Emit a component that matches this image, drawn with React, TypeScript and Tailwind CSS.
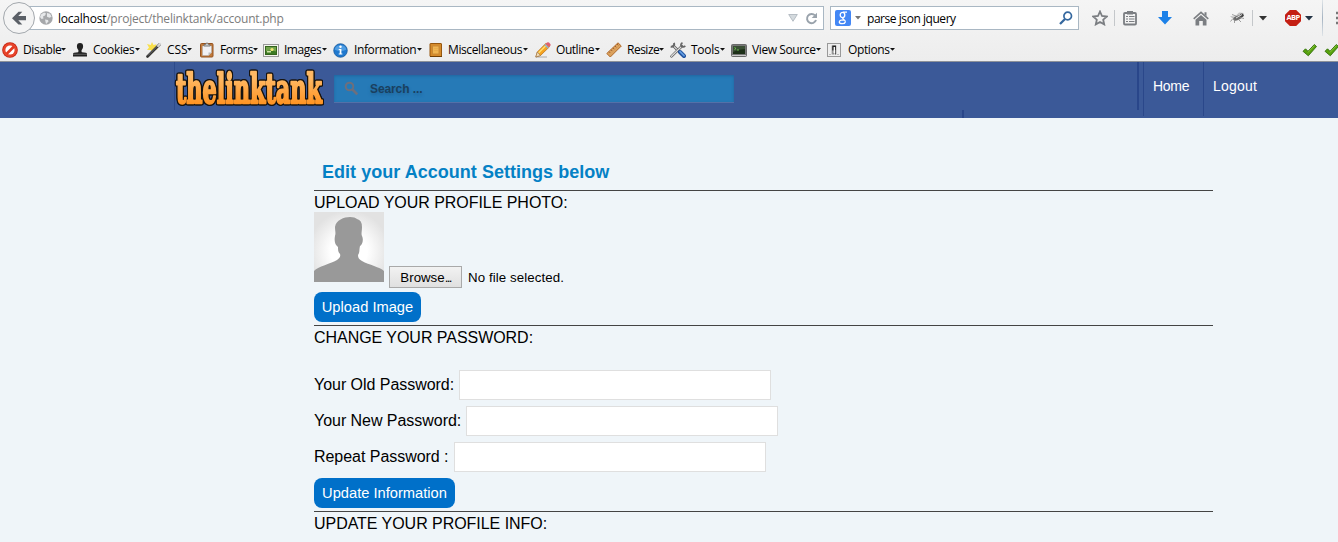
import React from "react";

const ui = "font-['Open_Sans','Noto_Sans',sans-serif]";

const DisableIcon = () => (
  <svg width="16" height="16" viewBox="0 0 16 16">
    <circle cx="8" cy="8" r="7.8" fill="#c5230f" />
    <circle cx="8" cy="8" r="7" fill="#e8452c" />
    <circle cx="8" cy="8" r="4.6" fill="#fff" />
    <path d="M3.6 11 11 3.6 13 5.4 5.4 13z" fill="#e2391f" />
  </svg>
);
const CookiesIcon = () => (
  <svg width="16" height="16" viewBox="0 0 16 16">
    <path d="M8 1a3.2 3.2 0 0 1 3.1 3.3c0 1.8-.8 2.8-1.4 3.8-.3.7-.2 1.7.2 2.2l4.1.5q1 .2 1 1.2v2.5H1V12q0-1 1-1.2l4.1-.5c.4-.5.5-1.5.2-2.2C5.7 7.1 4.9 6.1 4.9 4.3A3.2 3.2 0 0 1 8 1z" fill="#222" />
    <path d="M1 12.3h14" stroke="#777" strokeWidth=".7" />
  </svg>
);
const CssIcon = () => (
  <svg width="16" height="16" viewBox="0 0 16 16">
    <path d="m6 0 1.5 3 3-.8-.8 3 2 2-3 .5L7 11 5 8 1 8l2-2.5L1 2l3.7 1z" fill="#f9e04c" />
    <path d="M1.5 14.5 13.5 2.5" stroke="#333" strokeWidth="2.6" strokeLinecap="round" />
    <path d="M12 4 14.2 1.8" stroke="#ddd" strokeWidth="2" strokeLinecap="round" />
    <path d="M2 13.5 12 3.5" stroke="#999" strokeWidth=".6" />
  </svg>
);
const FormsIcon = () => (
  <svg width="16" height="16" viewBox="0 0 16 16">
    <rect x="1.5" y="1.5" width="12.5" height="13.5" rx="1" fill="#c07a3c" stroke="#96531f" />
    <path d="M3.5 4h9v6.500l-3 3h-6z" fill="#f1f1f4" stroke="#aaa" strokeWidth=".5" />
    <path d="M9.500 13.500v-3h3z" fill="#bbb" />
    <path d="M5 4V2.500h1.500a1.500 1.500 0 0 1 3 0H11V4z" fill="#ccc" stroke="#666" strokeWidth=".7" />
  </svg>
);
const ImagesIcon = () => (
  <svg width="16" height="16" viewBox="0 0 16 16">
    <rect x=".5" y="2.500" width="15" height="12" fill="#f5f5ee" stroke="#999" />
    <rect x="2.500" y="4.500" width="11" height="8" fill="#71a34a" stroke="#34641d" />
    <path d="M3 12V9.500q4-2 10 0V12z" fill="#3c7a22" />
    <circle cx="9" cy="7.500" r="1.600" fill="#f4e878" />
    <path d="M4 9h4v1.500H4z" fill="#cfe3a8" />
  </svg>
);
const InfoIcon = () => (
  <svg width="16" height="16" viewBox="0 0 16 16">
    <circle cx="7.500" cy="8.500" r="6.800" fill="#2079cf" stroke="#115497" strokeWidth=".7" />
    <path d="M1.500 7.500a6.200 5.800 0 0 1 12 0q-6 3-12 0z" fill="#64aceb" opacity=".7" />
    <circle cx="7.500" cy="4.800" r="1.200" fill="#fff" />
    <path d="M5.700 7h2.700v4.500h1v1H5.700v-1h1V8h-1z" fill="#fff" />
  </svg>
);
const MiscIcon = () => (
  <svg width="14" height="16" viewBox="0 0 14 16">
    <rect x="1" y="1.500" width="11.500" height="13" rx=".5" fill="#d68b2b" stroke="#96570f" />
    <rect x="3.500" y="4" width="6.500" height="8" fill="#f0b552" stroke="#c98a36" />
    <path d="M5 6.500h4M5 8.500h4" stroke="#e8ac4c" />
    <path d="M1 14.500h12" stroke="#704007" />
  </svg>
);
const OutlineIcon = () => (
  <svg width="16" height="16" viewBox="0 0 16 16">
    <path d="M1 15h11" stroke="#aaa" strokeWidth="1" />
    <path d="m.8 15 1.500-5L11 1.300l3.500 3.500L5.500 13.500z" fill="#f5a321" stroke="#b36a0e" strokeWidth=".7" />
    <path d="m3.500 11 8-8" stroke="#ffdf71" strokeWidth="1.500" />
    <path d="m.8 15 1.500-5 3.200 3.500z" fill="#f2ddba" stroke="#846340" strokeWidth=".5" />
    <path d="m10.500 2 1.500-1.500q1-.7 2 0l1.300 1.400q.7 1 0 1.800L14 5z" fill="#df6070" />
    <path d="m9.800 2.500 3.500 3.500" stroke="#8eaed0" strokeWidth="1.500" />
  </svg>
);
const ResizeIcon = () => (
  <svg width="16" height="16" viewBox="0 0 16 16">
    <path d="M.8 11.500 12 .8 15.300 4 4.300 15z" fill="#dba15c" stroke="#b06a2c" />
    <path d="m3 9.700 1.300 1.300m.7-3.200 1.300 1.300m.7-3.200 1.300 1.300M9 4l1.300 1.300M11 2l1.300 1.300" stroke="#925224" strokeWidth=".8" />
  </svg>
);
const ToolsIcon = () => (
  <svg width="16" height="16" viewBox="0 0 16 16">
    <path d="m3.500 4 9 9" stroke="#555" strokeWidth="2.600" />
    <path d="m3.500 4 5 5" stroke="#d4d4d4" strokeWidth="1.300" />
    <path d="M4 .8a3 3 0 0 1-3.300 4" fill="none" stroke="#666" strokeWidth="2" />
    <path d="M1.500 14.300 12 4" stroke="#555" strokeWidth="2.500" strokeLinecap="round" />
    <path d="M1.500 14.300 12 4" stroke="#ddd" strokeWidth="1.200" strokeLinecap="round" />
    <path d="M12.500.8q-2.500 1.500-1 3.300t3.800-.3" fill="none" stroke="#666" strokeWidth="1.700" />
    <path d="m10 10 4 4" stroke="#1c4e9c" strokeWidth="4" strokeLinecap="round" />
    <path d="m10 9.700 4 4" stroke="#629ce0" strokeWidth="1.800" strokeLinecap="round" />
  </svg>
);
const SourceIcon = () => (
  <svg width="16" height="16" viewBox="0 0 16 16">
    <rect x=".5" y="2.500" width="15" height="12" rx="1" fill="#777" stroke="#6a6a6a" />
    <rect x="2" y="4" width="12" height="8" fill="#1d3018" />
    <path d="M2 4h12v3Q8 7 2 10z" fill="#3a4f35" />
    <path d="m3.500 5.500 1.500 1-1.500 1M6 8h2" fill="none" stroke="#77da54" strokeWidth=".8" />
    <path d="M1 13.500h14" stroke="#ccc" />
  </svg>
);
const OptionsIcon = () => (
  <svg width="14" height="16" viewBox="0 0 14 16">
    <rect x=".5" y="1.500" width="13" height="13" fill="#eee" stroke="#999" />
    <path d="M4 3.500h6v9H4z" fill="#d0d0d0" />
    <rect x="5.200" y="3.500" width="3.800" height="5" fill="#222" />
    <path d="M5.500 8h1v4.500h-1zM8 8h1v4.500H8z" fill="#555" />
    <path d="M6.600 5h1.500v6H6.600z" fill="#fff" />
    <path d="M2.500 12.500h1m7 0h1" stroke="#888" />
  </svg>
);
const Check = () => (
  <svg className="shrink-0" width="16" height="16" viewBox="0 0 16 16">
    <path d="M1 9.300 3.500 6.800 6 9.300 12.300 2.500 14.500 4.500 6.300 13.800z" fill="#57a10d" stroke="#32700a" strokeWidth=".9" strokeLinejoin="round" />
    <path d="m6 10.400 6.500-6.900" stroke="#96d347" strokeWidth=".8" />
  </svg>
);

type Tool = { label: string; icon: React.ReactNode; box: string; text: string };
const tools: Tool[] = [
  { label: "Disable", icon: <DisableIcon />, box: "w-[70px]", text: "w-[38px] tracking-[-0.4px]" },
  { label: "Cookies", icon: <CookiesIcon />, box: "w-[74px]", text: "w-[42px] tracking-[-0.35px]" },
  { label: "CSS", icon: <CssIcon />, box: "w-[53px]", text: "w-[20px] tracking-[-0.1px]" },
  { label: "Forms", icon: <FormsIcon />, box: "w-[64px]", text: "w-[33px] tracking-[-0.4px]" },
  { label: "Images", icon: <ImagesIcon />, box: "w-[70px]", text: "w-[38px] tracking-[-0.5px]" },
  { label: "Information", icon: <InfoIcon />, box: "w-[96px]", text: "w-[63px] tracking-[-0.38px]" },
  { label: "Miscellaneous", icon: <MiscIcon />, box: "w-[106px]", text: "w-[75px] tracking-[-0.4px]" },
  { label: "Outline", icon: <OutlineIcon />, box: "w-[71px]", text: "w-[39px] tracking-[-0.45px]" },
  { label: "Resize", icon: <ResizeIcon />, box: "w-[64px]", text: "w-[32px] tracking-[-0.5px]" },
  { label: "Tools", icon: <ToolsIcon />, box: "w-[61px]", text: "w-[29px] tracking-[-0.25px]" },
  { label: "View Source", icon: <SourceIcon />, box: "w-[96px]", text: "w-[64px] tracking-[-0.4px]" },
  { label: "Options", icon: <OptionsIcon />, box: "w-[70px]", text: "ml-[7px] w-[42px] tracking-[-0.4px]" },
];

const Caret = ({ className = "" }: { className?: string }) => (
  <svg className={"shrink-0 " + className} width="8" height="5" viewBox="0 0 8 5">
    <path d="M0 0h8L4 4.600z" fill="currentColor" />
  </svg>
);

function Browser() {
  return (
    <div className={"h-[62px] border-b border-[#8e9299] bg-gradient-to-b from-[#f5f5f5] to-[#ededed] text-[12px] text-black " + ui}>
      <div className="flex h-[38px] items-start">
        <svg className="z-10 shrink-0" width="36" height="36" viewBox="0 0 36 36">
          <circle cx="19" cy="18" r="15.500" fill="#f4f4f4" stroke="#a3a8ad" />
          <path d="M12 18.200 18.500 11.700h3.800L18.300 16h7.700v4.200h-7.700l4 4.300h-3.800z" fill="#5b6067" />
        </svg>
        <div className="mt-[6px] -ml-[16px] flex h-6 w-[804px] shrink-0 items-center border border-[#a9b7c3] bg-white pr-[5px] pl-[18px]">
          <svg width="14" height="14" viewBox="0 0 14 14">
            <circle cx="7" cy="7" r="6.700" fill="#a6a8ab" />
            <path d="M2 3.500 5 1.500l2 1-1 2-2 1 .5 2-2 .5L1 6zM8 2l3 .7 1.500 3-2 1-2.500-1zM6 8.500l3 .5.5 1.500L7 13z" fill="#e6e8ea" />
          </svg>
          <span className="ml-[5px] grow whitespace-nowrap text-[12px] tracking-[-0.23px] text-[#7c7c7c]"><span className="text-black">localhost</span>/project/thelinktank/account.php</span>
          <svg width="10" height="8" viewBox="0 0 10 8"><path d="M.7.5h8.600L5 7.300z" fill="#d4dade" stroke="#a9b2ba" strokeWidth=".8" /></svg>
          <svg className="ml-[7px]" width="13" height="13" viewBox="0 0 13 13">
            <path d="M10 3.400A4.600 4.600 0 1 0 11 8" fill="none" stroke="#9aa3ac" strokeWidth="2" />
            <path d="M12 .7v5.200H6.700z" fill="#9aa3ac" />
          </svg>
        </div>
        <div className="mt-[6px] ml-[6px] flex h-6 w-[249px] shrink-0 items-center border border-[#a9b7c3] bg-white pr-[5px] pl-1">
          <span className="flex h-4 w-4 shrink-0 items-center justify-center rounded-[2px] bg-[#4387f5]">
            <svg width="12" height="14" viewBox="0 0 12 14" fill="none" stroke="#fff">
              <ellipse cx="5.500" cy="4" rx="2.300" ry="2.600" strokeWidth="1.300" />
              <path d="M6 1.200h4M6.500 6.500C4 8 8.800 8.500 8.300 11c-.6 2.300-6 2.200-6 0 0-1.800 3-2.300 5-1.800" strokeWidth="1.300" />
            </svg>
          </span>
          <svg className="ml-1" width="6" height="4" viewBox="0 0 6 4"><path d="M0 0h6L3 3.500z" fill="#777" /></svg>
          <span className="ml-[6px] grow whitespace-nowrap tracking-[-0.45px]">parse json jquery</span>
          <svg width="14" height="14" viewBox="0 0 14 14" fill="none" stroke="#35689f">
            <circle cx="8.700" cy="5" r="3.800" strokeWidth="1.700" />
            <path d="m6 8-5 5" strokeWidth="2.300" />
          </svg>
        </div>
        <div className="flex h-9 grow items-center overflow-hidden text-[#7b7e82]">
          <svg className="ml-[13px] shrink-0" width="16" height="16" viewBox="0 0 16 16">
            <path d="m8 1.500 2 4.500 4.800.5-3.600 3.200 1 4.700L8 12l-4.200 2.400 1-4.700-3.600-3.200L6 6z" fill="none" stroke="currentColor" strokeWidth="1.800" />
          </svg>
          <span className="ml-[6px] h-4 w-px shrink-0 bg-[#c4c7ca]" />
          <svg className="ml-[8px] shrink-0" width="14" height="16" viewBox="0 0 14 16">
            <rect x="1" y="3" width="12" height="11.500" rx="1" fill="none" stroke="currentColor" strokeWidth="1.800" />
            <path d="M4 1h6v3.500H4z" fill="currentColor" />
            <path d="M3 6.500h2m1 0h5.500M3 9h2m1 0h5.500M3 11.500h2m1 0h5.500" stroke="currentColor" strokeWidth="1.200" />
          </svg>
          <svg className="ml-[21px] shrink-0" width="14" height="14" viewBox="0 0 14 14"><path d="M4 0h6v6h4l-7 7.500L0 6h4z" fill="#1c81e8" /></svg>
          <svg className="ml-[21px] shrink-0" width="16" height="15" viewBox="0 0 16 15">
            <path d="M8 .3 15.800 7.300l-1 1.200L8 2.600 1.200 8.500l-1-1.200z" fill="currentColor" />
            <path d="m8 4 5.500 4.800v5.700H9.800v-4.500H6.200v4.500H2.500V8.800zM11.500 1.200h2v4l-2-1.800z" fill="currentColor" />
          </svg>
          <svg className="ml-[20px] shrink-0" width="17" height="14" viewBox="0 0 17 14">
            <path d="m1 5 5 .5 4-4 5 .5-5 5-5 2z" fill="#c2c2c2" />
            <ellipse cx="8.500" cy="7" rx="4.500" ry="2.200" transform="rotate(-22 8.500 7)" fill="#6a6a6a" />
            <path d="m3.500 8-2 2.500m4-2v3.500m3.500-4 3 3m-1-4.500 4 1m-8-2.500-4-1.500" stroke="#888" strokeWidth=".8" />
            <circle cx="12.800" cy="4.300" r="1.900" fill="#444" />
            <path d="m7 7 6-3.500" stroke="#ddd" />
          </svg>
          <span className="ml-[6px] h-4 w-px shrink-0 bg-[#c4c7ca]" />
          <Caret className="ml-[6px] text-[#333]" />
          <div className="ml-[18px] flex h-4 w-4 shrink-0 items-center justify-center bg-[#c41f13] [clip-path:polygon(30%_0,70%_0,100%_30%,100%_70%,70%_100%,30%_100%,0_70%,0_30%)]">
            <span className="font-['Open_Sans',sans-serif] text-[7.500px] leading-none font-bold tracking-[-0.6px] text-white">ABP</span>
          </div>
          <Caret className="ml-1 text-[#223244]" />
          <span className="ml-[9px] h-9 w-px shrink-0 bg-gradient-to-b from-[#dfe4e8] via-[#a6b4c2] to-[#dfe4e8]" />
          <svg className="ml-[13px] shrink-0" width="10" height="14" viewBox="0 0 10 14"><path d="M0 2h10M0 7h10M0 12h10" stroke="#777" strokeWidth="2.500" /></svg>
        </div>
      </div>
      <div className="flex h-[23px] items-center overflow-hidden pl-[2px]">
        {tools.map((t) => (
          <div key={t.label} className={"flex shrink-0 items-center " + t.box}>
            <span className="shrink-0">{t.icon}</span>
            <span className={"ml-[5px] shrink-0 whitespace-nowrap " + t.text}>{t.label}</span>
            <svg className="shrink-0" width="5" height="3" viewBox="0 0 5 3"><path d="M0 0h5L2.500 2.800z" fill="#111" /></svg>
          </div>
        ))}
        <div className="ml-auto flex w-[36px] shrink-0 gap-[6px]"><Check /><Check /></div>
      </div>
    </div>
  );
}

function Header() {
  return (
    <header className="flex h-14 bg-[#3b5998]">
      <div className="w-[1143px] shrink-0">
        <div className="flex h-12">
          <div className="ml-[174px] flex w-[963px] border-l border-[#2c4a8b]">
            <svg className="mt-[3px] -ml-px overflow-visible [filter:drop-shadow(1px_0_0_#17130f)_drop-shadow(-1px_0_0_#17130f)_drop-shadow(0_1px_0_#17130f)_drop-shadow(0_-1px_0_#17130f)]" width="152" height="44" viewBox="0 0 152 44">
              <defs>
                <linearGradient id="brand" x1="0" y1="0" x2="0" y2="1">
                  <stop offset="0.300" stopColor="#ffb964" />
                  <stop offset="0.850" stopColor="#ff9220" />
                </linearGradient>
              </defs>
              <text x="2" y="18.300" transform="scale(1 2.050)" textLength="146" lengthAdjust="spacingAndGlyphs" fontFamily="DejaVu Serif, serif" fontWeight="700" fontSize="20.200" fill="url(#brand)" stroke="url(#brand)" strokeWidth="1.100" strokeLinejoin="round">thelinktank</text>
            </svg>
            <div className="mt-[13px] ml-[8px] flex h-[28px] w-[400px] items-center border-b border-[#5470a8] bg-[#267ab7] pl-[10px] shadow-[inset_0_1px_3px_#1f659f]">
              <svg width="15" height="15" viewBox="0 0 15 15" fill="none" stroke="#6e6f7c">
                <circle cx="5.500" cy="5.500" r="3.800" strokeWidth="2" />
                <path d="m8.500 8.500 4.800 4.800" strokeWidth="2.500" />
              </svg>
              <span className="ml-[11px] pt-px text-[12px] font-bold tracking-[-0.1px] text-[#1a405f] [text-shadow:0_2px_3px_#1f659a]">Search ...</span>
            </div>
          </div>
          <span className="w-[2px] bg-[#29468a]" />
        </div>
        <div className="ml-[962px] h-2 w-[2px] bg-[#29468a]" />
      </div>
      <nav className="flex h-[54px] items-start text-[14px] text-white">
        <a className="flex h-full w-[60px] border-l border-[#2a478a] pt-[15px] pl-[9px] tracking-[-0.3px]">Home</a>
        <a className="flex h-full border-l border-[#2a478a] pt-[15px] pl-[9px] tracking-[0.2px]">Logout</a>
      </nav>
    </header>
  );
}

const Avatar = () => (
  <svg className="shrink-0" width="70" height="70" viewBox="0 0 70 70">
    <defs>
      <radialGradient id="glow" cx=".5" cy=".56" r=".58">
        <stop offset="0.450" stopColor="#fff" />
        <stop offset="1" stopColor="#e2e2e2" />
      </radialGradient>
    </defs>
    <path d="M0 0h70v70H0z" fill="url(#glow)" />
    <path d="M0 70V59c3-4 18-8 23-11 2-2 4-3 3-6-2-2-2-4-2-7-3-2-4-6-3-11 1-3 0-5 0-9C22 8 30 5 36 5q5 0 7 2 5 1 5 8c0 4-1 7 0 9 2 4 0 9-2 10-1 4 0 6-2 9 0 3 1 4 4 6 7 4 18 6 22 10v11z" fill="#999" />
  </svg>
);

const Field = ({ label }: { label: string }) => (
  <label className="mb-[6px] flex h-[30px] items-center">
    <span className="pb-[2px] tracking-[-0.04px] whitespace-pre">{label}</span>
    <input type="password" className="ml-[5px] h-[30px] w-[312px] border border-[#dfdfdf] bg-white" />
  </label>
);

const Section = ({ children, height }: { children: React.ReactNode; height: string }) => (
  <section className={"border-t border-[#444] pt-[2px] " + height}>{children}</section>
);

export default function App() {
  return (
    <div className="h-[542px] w-[1338px] overflow-hidden bg-[#eff5f9] font-['Liberation_Sans',Arial,sans-serif] text-[16px] leading-[19px] text-black">
      <Browser />
      <Header />
      <main className="ml-[314px] w-[899px]">
        <div className="flex h-[72px] items-end pb-[7px] pl-2">
          <h1 className="text-[18px] leading-[21px] font-bold tracking-[0.03px] text-[#0481c5]">Edit your Account Settings below</h1>
        </div>
        <Section height="h-[135px]">
          <h2 className="tracking-[-0.04px]">UPLOAD YOUR PROFILE PHOTO:</h2>
          <div className="flex h-[80px] items-start">
            <Avatar />
            <div className="mt-[54px] ml-[5px] flex items-center text-[13.3px]">
              <button className="flex h-[22px] w-[73px] items-center justify-center border border-[#a9a9a9] bg-gradient-to-b from-[#f2f2f2] to-[#e0e0e0] pt-px">Browse<span className="tracking-[-1.7px]">...</span></button>
              <span className="ml-[6px] tracking-[0.08px]">No file selected.</span>
            </div>
          </div>
          <button className="flex h-[30px] w-[107px] items-center justify-center rounded-lg bg-[#0070c9] pt-px text-[14.700px] text-white">Upload Image</button>
        </Section>
        <Section height="h-[186px]">
          <h2 className="mb-[23px] tracking-[-0.04px]">CHANGE YOUR PASSWORD:</h2>
          <Field label="Your Old Password:" />
          <Field label="Your New Password:" />
          <Field label="Repeat Password :" />
          <button className="flex h-[30px] w-[141px] items-center justify-center rounded-lg bg-[#0070c9] pt-px text-[14.700px] text-white">Update Information</button>
        </Section>
        <Section height="h-[32px]">
          <h2 className="tracking-[-0.04px]">UPDATE YOUR PROFILE INFO:</h2>
        </Section>
      </main>
    </div>
  );
}
